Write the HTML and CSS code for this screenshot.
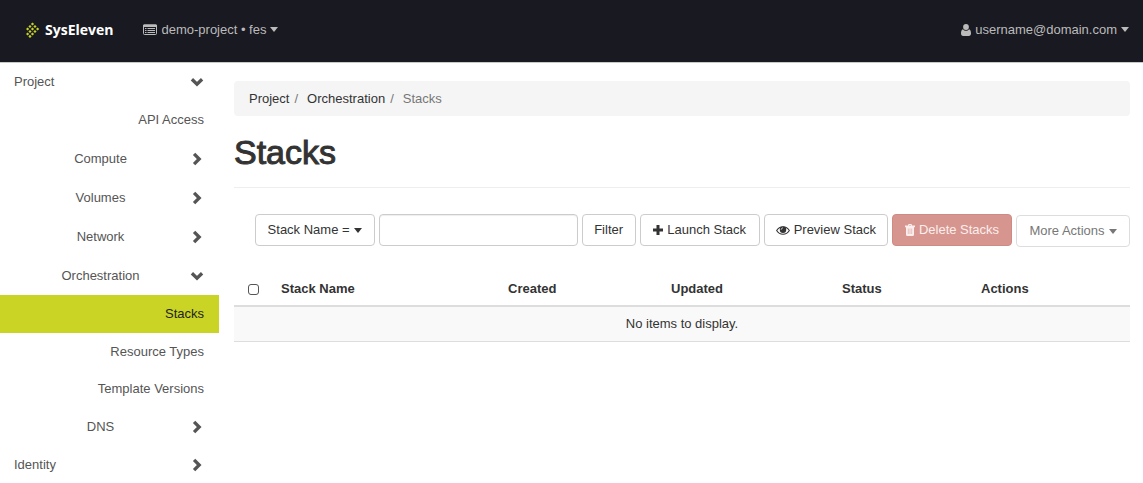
FILE: index.html
```
<!DOCTYPE html>
<html lang="en">
<head>
<meta charset="utf-8">
<title>Stacks</title>
<link rel="stylesheet" href="styles.css">
</head>
<body>
<svg class="sprite" aria-hidden="true">
  <symbol id="caret" viewBox="0 0 8 5"><path d="M0 0h8L4 5z"/></symbol>
  <symbol id="down" viewBox="0 0 14 14"><path d="M1.900 4.300L7 9.200l5.100-4.900" fill="none" stroke="currentColor" stroke-width="3.300"/></symbol>
  <symbol id="right" viewBox="0 0 14 14"><path d="M4.100 1.900L9.200 7l-5.100 5.100" fill="none" stroke="currentColor" stroke-width="3.300"/></symbol>
</svg>
<header class="topbar">
  <a class="brand" href="#">
    <svg class="logo" viewBox="0 0 14 16" aria-hidden="true">
      <path d="M6.500.4l1.600 1.600-1.600 1.600L4.900 2zM4 2.900l1.600 1.600L4 6.100 2.400 4.500zM9 2.900l1.600 1.600L9 6.100 7.400 4.500zM1.600 5.400L3.200 7 1.600 8.600 0 7zM6.500 5.400L8.100 7 6.500 8.600 4.900 7zM11.600 5.400L13.200 7l-1.600 1.600L10 7zM4 7.900l1.600 1.600L4 11.100 2.400 9.500zM9 7.900l1.600 1.600L9 11.100 7.400 9.500zM1.600 10.400L3.200 12l-1.600 1.600L0 12zM6.500 10.400L8.100 12l-1.600 1.600L4.900 12zM4 12.800l1.600 1.600L4 16l-1.600-1.600z"/>
    </svg>
    <span>SysEleven</span>
  </a>
  <button class="menu" type="button">
    <svg class="icon-list" viewBox="0 0 14 12" aria-hidden="true"><rect x=".5" y="1" width="13" height="9.500" rx="1" fill="none" stroke="currentColor"/><path d="M0 1.500Q0 .5 1 .5h12q1 0 1 1V3H0zM2 4h1.500v1H2zM4.500 4H12v1H4.500zM2 6h1.500v1H2zM4.500 6H12v1H4.500zM2 8h1.500v1H2zM4.500 8H12v1H4.500z"/></svg>
    <span>demo-project • fes</span>
    <svg class="caret" aria-hidden="true"><use href="#caret"/></svg>
  </button>
  <button class="menu user" type="button">
    <svg class="icon-user" viewBox="0 0 10 12" aria-hidden="true"><circle cx="5" cy="3" r="2.900"/><path d="M2 5.200C.5 5.700 0 7.400 0 9.300 0 11 .8 12 2.200 12h5.600C9.200 12 10 11 10 9.300 10 7.400 9.500 5.700 8 5.200 7.300 6.200 6.200 6.700 5 6.700S2.700 6.200 2 5.200z"/></svg>
    <span>username@domain.com</span>
    <svg class="caret" aria-hidden="true"><use href="#caret"/></svg>
  </button>
</header>
<div class="layout">
  <nav class="sidebar" aria-label="Main">
    <a class="item top" href="#"><span>Project</span><svg class="chev"><use href="#down"/></svg></a>
    <a class="item top leaf" href="#">API Access</a>
    <a class="item group" href="#"><span>Compute</span><svg class="chev"><use href="#right"/></svg></a>
    <a class="item group" href="#"><span>Volumes</span><svg class="chev"><use href="#right"/></svg></a>
    <a class="item group" href="#"><span>Network</span><svg class="chev"><use href="#right"/></svg></a>
    <a class="item group" href="#"><span>Orchestration</span><svg class="chev"><use href="#down"/></svg></a>
    <a class="item top leaf active" href="#" aria-current="page">Stacks</a>
    <a class="item leaf" href="#">Resource Types</a>
    <a class="item leaf" href="#">Template Versions</a>
    <a class="item group" href="#"><span>DNS</span><svg class="chev"><use href="#right"/></svg></a>
    <a class="item top" href="#"><span>Identity</span><svg class="chev"><use href="#right"/></svg></a>
  </nav>
  <main class="content">
    <ol class="breadcrumb">
      <li><a href="#">Project</a></li>
      <li><a href="#">Orchestration</a></li>
      <li>Stacks</li>
    </ol>
    <h1>Stacks</h1>
    <div class="toolbar">
      <button class="btn wide" type="button">Stack Name = <svg class="caret" aria-hidden="true"><use href="#caret"/></svg></button>
      <input class="search" type="text" aria-label="Filter value">
      <button class="btn" type="button">Filter</button>
      <button class="btn wide" type="button"><svg class="icon-plus" viewBox="0 0 10 10" aria-hidden="true"><path d="M3.500 0h3v3.500H10v3H6.500V10h-3V6.500H0v-3h3.500z"/></svg>Launch Stack</button>
      <button class="btn wide" type="button"><svg class="icon-eye" viewBox="0 0 13 10" aria-hidden="true"><path d="M.6 5C3.500.3 9.500.3 12.400 5 9.500 9.700 3.500 9.700.6 5z" fill="none" stroke="currentColor"/><circle cx="6.500" cy="4.400" r="3"/><path d="M4.800 4.300c0-1 .7-1.700 1.700-1.700" fill="none" stroke="#fff" stroke-width=".7"/></svg>Preview Stack</button>
      <button class="btn wide danger" type="button" disabled><svg class="icon-trash" viewBox="0 0 10 12" aria-hidden="true"><path fill-rule="evenodd" d="M3 1.500L3.500 0h3L7 1.500h3v1.700H9V10.500Q9 12 7.700 12H2.300Q1 12 1 10.500V3.200H0V1.500zM4 1.500h2L5.800.9H4.200zM2.900 4.500v5.500h.5V4.500zM4.750 4.500v5.500h.5V4.500zM6.600 4.500v5.500h.5V4.500z"/></svg>Delete Stacks</button>
      <button class="btn more" type="button" disabled>More Actions <svg class="caret" aria-hidden="true"><use href="#caret"/></svg></button>
    </div>
    <table class="stacks">
      <colgroup><col class="c-check"><col class="c-name"><col class="c-created"><col class="c-updated"><col class="c-status"><col></colgroup>
      <thead>
        <tr><th><input class="check" type="checkbox" aria-label="Select all"></th><th>Stack Name</th><th>Created</th><th>Updated</th><th>Status</th><th>Actions</th></tr>
      </thead>
      <tbody><tr><td colspan="6">No items to display.</td></tr></tbody>
    </table>
  </main>
</div>
</body>
</html>
```

FILE: styles.css
```
* { box-sizing: border-box; }
body {
  margin: 0;
  background: #fff;
  color: #333;
  font: 13px/18px "Liberation Sans", Arial, sans-serif;
}
a { color: inherit; text-decoration: none; }
button, input { font: inherit; }
svg { fill: currentColor; flex: none; }
.sprite { display: none; }
.caret { width: 8px; height: 5px; }

.topbar {
  display: flex;
  align-items: center;
  height: 63px;
  padding: 0 14px 3px 26px;
  background: #191921;
  border-bottom: 1px solid #c8c8c8;
}
.brand {
  display: flex;
  align-items: center;
  gap: 5px;
  margin-right: 30px;
  color: #fff;
  font: bold 14px/20px "Open Sans", sans-serif;
}
.logo { width: 14px; height: 16px; color: #c9d421; }
.menu {
  display: flex;
  align-items: center;
  gap: 4px;
  padding: 0;
  border: 0;
  background: none;
  color: #bbb;
}
.user { margin-left: auto; }
.icon-list { width: 14px; height: 12px; }
.icon-user { width: 10px; height: 12px; }

.layout { display: flex; }
.sidebar { flex: 0 0 219px; }
.item {
  display: flex;
  align-items: center;
  justify-content: space-between;
  height: 37px;
  padding: 0 15px 0 14px;
  color: #555;
}
.top { height: 38px; }
.leaf { justify-content: flex-end; }
.group { height: 39px; padding-left: 11px; }
.group span { flex: 1; text-align: center; }
.active { background: #c9d424; color: #222; }
.chev { width: 14px; height: 14px; }

.content { flex: 1; min-width: 0; padding: 18px 13px 0 15px; }
.breadcrumb {
  display: flex;
  margin: 0;
  padding: 9px 15px 8px;
  list-style: none;
  border-radius: 4px;
  background: #f5f5f5;
  color: #777;
}
.breadcrumb a { color: #333; }
.breadcrumb li + li::before { content: "/"; padding: 0 9px 0 5px; }
h1 {
  margin: 16px 0 26px;
  padding-bottom: 15px;
  border-bottom: 1px solid #eee;
  font-size: 34px;
  line-height: 40px;
  font-weight: 400;
  -webkit-text-stroke: 1px #333;
}

.toolbar { display: flex; justify-content: flex-end; gap: 4px; }
.btn {
  display: flex;
  align-items: center;
  justify-content: center;
  gap: 4px;
  min-width: 54px;
  height: 32px;
  padding: 0 11px;
  border: 1px solid #ccc;
  border-radius: 4px;
  background: #fff;
  color: #333;
  white-space: nowrap;
}
.wide { min-width: 120px; }
.danger { border-color: #d08a84; background: #d6968f; color: #fbeeed; }
.more { min-width: 114px; margin-top: 1px; border-color: #ddd; color: #777; }
.search {
  width: 199px;
  height: 32px;
  padding: 0 12px;
  border: 1px solid #ccc;
  border-radius: 4px;
  box-shadow: inset 0 1px 1px #eee;
}
.icon-plus { width: 10px; height: 10px; }
.icon-eye { width: 14px; height: 11px; }
.icon-trash { width: 10px; height: 12px; }

.stacks {
  width: 100%;
  margin-top: 24px;
  border-collapse: collapse;
  table-layout: fixed;
}
.c-check { width: 39px; }
.c-name { width: 227px; }
.c-created { width: 163px; }
.c-updated { width: 171px; }
.c-status { width: 139px; }
th { padding: 9px 8px 7px; border-bottom: 2px solid #ddd; text-align: left; }
th:first-child { padding-left: 14px; }
td { padding: 8px; border-bottom: 1px solid #ddd; background: #f9f9f9; text-align: center; }
.check {
  display: block;
  width: 11px;
  height: 11px;
  margin: 0;
  appearance: none;
  border: 1px solid #555;
  border-radius: 3px;
  background: #fff;
}
```
